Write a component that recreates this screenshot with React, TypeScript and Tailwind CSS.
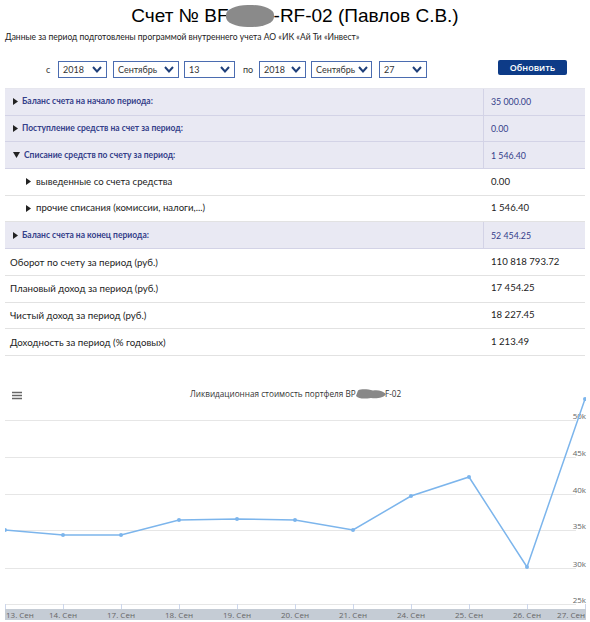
import React from "react";

const Chevron = () => (
  <svg width="10" height="7" viewBox="0 0 10 7" className="shrink-0">
    <path d="M1 1 L5 5.5 L9 1" fill="none" stroke="#1f3f7a" strokeWidth="2" />
  </svg>
);

const Sel = ({ v, w }: { v: string; w: string }) => (
  <div className={`${w} h-[17px] border border-[#4b6cb0] bg-white flex items-center justify-between gap-[3px] pl-[4px] pr-[4px] text-[9px] text-[#333]`}>
    <span>{v}</span>
    <Chevron />
  </div>
);

const Tri = ({ down }: { down?: boolean }) =>
  down ? (
    <svg width="7" height="6" viewBox="0 0 7 6" className="shrink-0">
      <path d="M0 0 L7 0 L3.5 6 Z" fill="#222" />
    </svg>
  ) : (
    <svg width="5" height="7" viewBox="0 0 5 7" className="shrink-0">
      <path d="M0 0 L5 3.5 L0 7 Z" fill="#222" />
    </svg>
  );

const HeadRow = ({ label, value, down }: { label: string; value: string; down?: boolean }) => (
  <div className="flex h-[26.7px] bg-[#e9e9f3] border-b border-[#d3d3e6]">
    <div className="w-[479px] flex items-center gap-[4px] pl-[8px] text-[8.5px] font-bold text-[#34408a] border-r border-[#d3d3e6]">
      <Tri down={down} />
      <span>{label}</span>
    </div>
    <div className="flex-1 flex items-center pl-[7px] text-[8.8px] text-[#34408a]">{value}</div>
  </div>
);

const SubRow = ({ label, value }: { label: string; value: string }) => (
  <div className="flex h-[26.7px] border-b border-[#e2e2e2]">
    <div className="w-[480px] flex items-center gap-[5px] pl-[21px] text-[9.6px] text-[#222]">
      <Tri />
      <span>{label}</span>
    </div>
    <div className="flex-1 flex items-center pl-[6px] text-[9.6px] text-[#222]">{value}</div>
  </div>
);

const PlainRow = ({ label, value }: { label: string; value: string }) => (
  <div className="flex h-[26.7px] border-b border-[#e2e2e2]">
    <div className="w-[480px] flex items-center pl-[5px] text-[9.7px] text-[#222]">{label}</div>
    <div className="flex-1 flex items-center pl-[6px] text-[9.6px] text-[#222]">{value}</div>
  </div>
);

const pts: [number, number][] = [
  [5, 159],
  [63, 164],
  [121, 164],
  [179, 149],
  [237, 148],
  [295, 149],
  [353, 159],
  [411, 125],
  [469, 106],
  [527, 196],
  [585, 28],
];
const labels = ["13. Сен", "14. Сен", "17. Сен", "18. Сен", "19. Сен", "20. Сен", "21. Сен", "24. Сен", "25. Сен", "26. Сен", "27. Сен"];
const grid: [number, string][] = [
  [49, "50k"],
  [86, "45k"],
  [123, "40k"],
  [159, "35k"],
  [197, "30k"],
  [233, "25k"],
];

const Chart = () => (
  <svg width="590" height="252" viewBox="0 0 590 252" className="block" style={{ fontFamily: "'Open Sans', sans-serif" }}>
    <defs>
      <clipPath id="plot">
        <rect x="5" y="0" width="581" height="252" />
      </clipPath>
    </defs>
    <g stroke="#666" strokeWidth="1.5">
      <line x1="12" y1="21.5" x2="22" y2="21.5" />
      <line x1="12" y1="24.5" x2="22" y2="24.5" />
      <line x1="12" y1="27.5" x2="22" y2="27.5" />
    </g>
    <text x="190" y="26" fontSize="8.2" fill="#333">
      Ликвидационная стоимость портфеля BP
    </text>
    <text x="385" y="26" fontSize="8.2" fill="#333">
      F-02
    </text>
    <path d="M358 19.5 C362 17.5 368 18.5 373 19.5 C378 18.5 383 20 386 23 C384 27 376 28 371 27 C364 28 359 28 356 25 Z" fill="#888" />
    {grid.map(([y, t]) => (
      <g key={t}>
        <line x1="5" y1={y + 0.5} x2="576" y2={y + 0.5} stroke="#e6e6e6" strokeWidth="1" />
        <text x="586" y={y - 1.5} textAnchor="end" fontSize="8" fill="#666">
          {t}
        </text>
      </g>
    ))}
    {pts.map(([x], i) => (
      <line key={i} x1={x + 0.5} y1="233" x2={x + 0.5} y2="238" stroke="#ccd6eb" />
    ))}
    <rect x="5" y="238" width="581" height="11" fill="#c5ccd5" />
    <g clipPath="url(#plot)">
      {pts.map(([x], i) => (
        <text key={i} x={i === 0 ? x + 1 : x} y="246.5" textAnchor={i === 0 ? "start" : i === 10 ? "end" : "middle"} fontSize="8" fill="#666">
          {labels[i]}
        </text>
      ))}
      <polyline points={pts.map((p) => p.join(",")).join(" ")} fill="none" stroke="#7cb5ec" strokeWidth="1.5" />
      {pts.map(([x, y], i) => (
        <circle key={i} cx={x} cy={y} r="2" fill="#7cb5ec" />
      ))}
    </g>
  </svg>
);

export default function App() {
  return (
    <div className="w-[590px] h-[622px] overflow-hidden bg-white font-['Liberation_Sans',sans-serif] text-black">
      <div className="h-[30px] flex items-center justify-center text-[19px] leading-[24px] pt-[2px]">
        <span>Счет № BF</span>
        <span className="inline-block w-[48px] h-[22px] bg-[#8a8a8a] rounded-[45%] -ml-[3px]" />
        <span>-RF-02 (Павлов С.В.)</span>
      </div>
      <div className="pl-[5px] mt-[1px] h-[12px] leading-[12px] text-[8.5px] text-[#222] font-['Lato',sans-serif]">
        Данные за период подготовлены программой внутреннего учета АО «ИК «Ай Ти «Инвест»
      </div>
      <div className="flex items-center mt-[18px] h-[17px] font-['Lato',sans-serif]">
        <span className="ml-[46px] mr-[8px] text-[9px] text-[#333] w-[4px]">с</span>
        <Sel v="2018" w="w-[49px]" />
        <div className="w-[6px]" />
        <Sel v="Сентябрь" w="w-[66px]" />
        <div className="w-[5px]" />
        <Sel v="13" w="w-[51px]" />
        <span className="ml-[8px] text-[9px] text-[#333] w-[16px]">по</span>
        <Sel v="2018" w="w-[47px]" />
        <div className="w-[5px]" />
        <Sel v="Сентябрь" w="w-[61px]" />
        <div className="w-[7px]" />
        <Sel v="27" w="w-[48px]" />
        <button className="ml-[71px] -mt-[4px] w-[69px] h-[15px] rounded-[2px] bg-[#0d3b87] text-white text-[9px] font-semibold leading-[15px] font-['Open_Sans',sans-serif]">
          Обновить
        </button>
      </div>
      <div className="mx-[5px] mt-[10px] font-['Lato',sans-serif] border-t border-[#e6e6ee]">
        <HeadRow label="Баланс счета на начало периода:" value="35 000.00" />
        <HeadRow label="Поступление средств на счет за период:" value="0.00" />
        <HeadRow label="Списание средств по счету за период:" value="1 546.40" down />
        <SubRow label="выведенные со счета средства" value="0.00" />
        <SubRow label="прочие списания (комиссии, налоги,...)" value="1 546.40" />
        <HeadRow label="Баланс счета на конец периода:" value="52 454.25" />
        <PlainRow label="Оборот по счету за период (руб.)" value="110 818 793.72" />
        <PlainRow label="Плановый доход за период (руб.)" value="17 454.25" />
        <PlainRow label="Чистый доход за период (руб.)" value="18 227.45" />
        <PlainRow label="Доходность за период (% годовых)" value="1 213.49" />
      </div>
      <div className="mt-[15px]">
        <Chart />
      </div>
    </div>
  );
}
